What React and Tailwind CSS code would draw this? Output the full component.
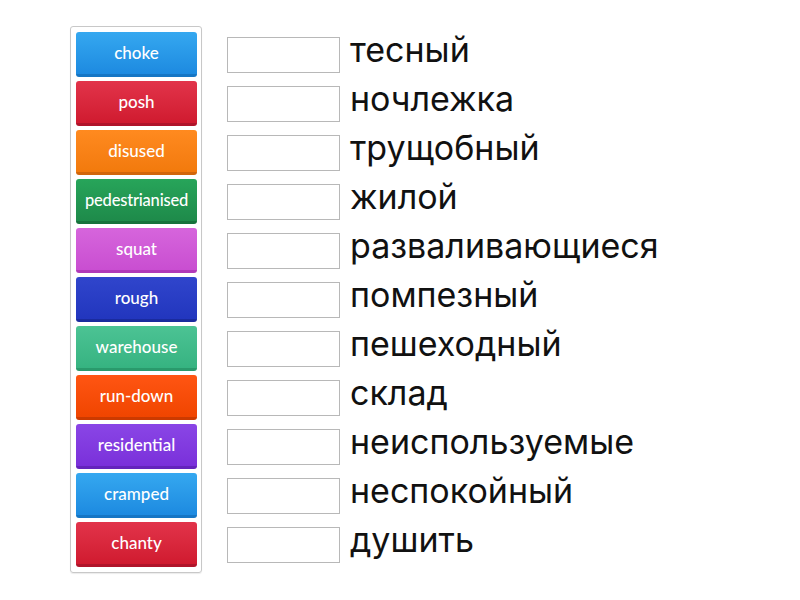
const tiles = [
  { label: 'choke', size: 'text-[17px]', cls: 'bg-gradient-to-b from-[#35a8f0] to-[#1d8ae0] border-b-[#1676c4]' },
  { label: 'posh', size: 'text-[17px]', cls: 'bg-gradient-to-b from-[#e2334a] to-[#d01a2f] border-b-[#b0142a]' },
  { label: 'disused', size: 'text-[17px]', cls: 'bg-gradient-to-b from-[#ff8a1f] to-[#f27a0c] border-b-[#d2660a]' },
  { label: 'pedestrianised', size: 'text-[16.5px] tracking-[-0.2px]', cls: 'bg-gradient-to-b from-[#27a55a] to-[#1e8a4a] border-b-[#17723c]' },
  { label: 'squat', size: 'text-[17px]', cls: 'bg-gradient-to-b from-[#d665dc] to-[#c94ed1] border-b-[#b13ab9]' },
  { label: 'rough', size: 'text-[17px]', cls: 'bg-gradient-to-b from-[#3045cc] to-[#2236be] border-b-[#1a2b9e]' },
  { label: 'warehouse', size: 'text-[17px]', cls: 'bg-gradient-to-b from-[#4cc394] to-[#36b381] border-b-[#2a9a6c]' },
  { label: 'run-down', size: 'text-[17px]', cls: 'bg-gradient-to-b from-[#ff5512] to-[#f04500] border-b-[#cc3a00]' },
  { label: 'residential', size: 'text-[17px]', cls: 'bg-gradient-to-b from-[#8a45e6] to-[#7a30da] border-b-[#6424bc]' },
  { label: 'cramped', size: 'text-[17px]', cls: 'bg-gradient-to-b from-[#35a8f0] to-[#1d8ae0] border-b-[#1676c4]' },
  { label: 'chanty', size: 'text-[17px]', cls: 'bg-gradient-to-b from-[#e2334a] to-[#d01a2f] border-b-[#b0142a]' },
];

const words = [
  'тесный',
  'ночлежка',
  'трущобный',
  'жилой',
  'разваливающиеся',
  'помпезный',
  'пешеходный',
  'склад',
  'неиспользуемые',
  'неспокойный',
  'душить',
];

export default function App() {
  return (
    <div className="min-h-screen bg-white flex items-start pt-[26px] pl-[70px]">
      <div className="w-[132px] border border-[#c8c8c8] rounded-[3px] p-[5px] flex flex-col gap-[4px] shadow-[0_1px_1px_rgba(0,0,0,0.08)]">
        {tiles.map((t) => (
          <div
            key={t.label}
            className={`h-[45px] w-[121px] rounded-[3px] border-b-[3px] flex items-center justify-center text-white font-[Lato,'Liberation_Sans',sans-serif] font-medium whitespace-nowrap ${t.size} ${t.cls}`}
          >
            {t.label}
          </div>
        ))}
      </div>
      <div className="ml-[25px] pt-[6px] flex flex-col gap-[4px]">
        {words.map((w) => (
          <div key={w} className="h-[45px] flex items-center">
            <div className="w-[113px] h-[36px] border border-[#b8b8b8] bg-white" />
            <span className="ml-[10px] text-[34px] leading-none text-[#111] font-[Inter,'Liberation_Sans',sans-serif] -mt-[10px]">
              {w}
            </span>
          </div>
        ))}
      </div>
    </div>
  );
}
